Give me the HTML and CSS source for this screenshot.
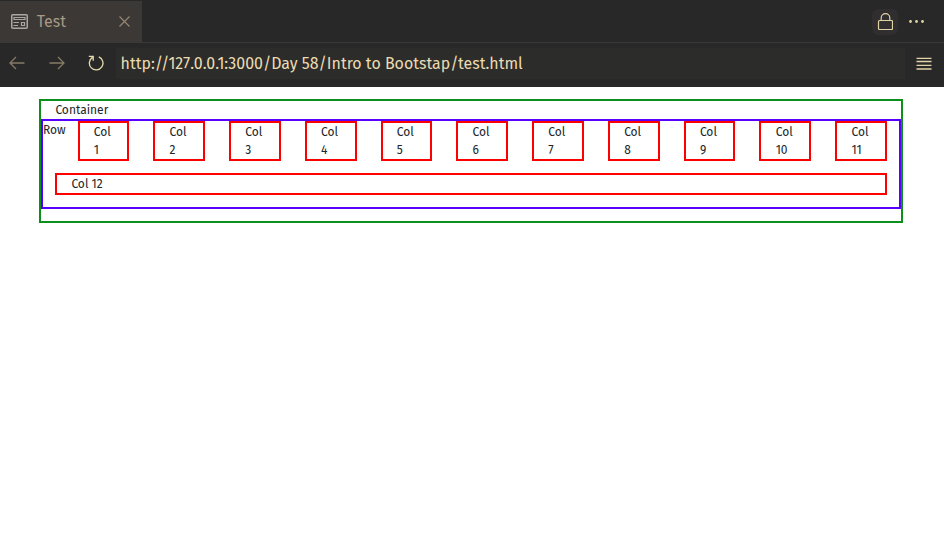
FILE: index.html
```html
<!DOCTYPE html>
<html lang="en">
<head>
<meta charset="utf-8">
<title>Test</title>
<link rel="stylesheet" href="styles.css">
</head>
<body>
<header class="tabs">
  <div class="tab">
    <svg class="page-icon" width="17" height="15" viewBox="0 0 17 15" fill="none" stroke="#a9a7a5"><rect x=".75" y=".75" width="15.5" height="13.5" rx="1" stroke-width="1.5"/><path d="M3 3.5h11v2H3zM10.5 8.5h3v3h-3zM2.5 8.5h5.5M2.5 11.5h4.5" stroke-width="1.2"/></svg>
    <span class="tab-title">Test</span>
    <svg class="close" width="11" height="11" viewBox="0 0 11 11" fill="none" stroke="#958670" stroke-width="1.2"><path d="M.5.5l10 10M10.5.5l-10 10"/></svg>
  </div>
  <div class="actions">
    <div class="lock"><svg width="16" height="18" viewBox="0 0 16 18" fill="none" stroke="#e0d3a6" stroke-width="1.2"><rect x="1.5" y="7.5" width="14" height="9" rx="1"/><path d="M4.2 7.5V4.9a4.3 4.3 0 0 1 8.6 0v2.6"/></svg></div>
    <svg class="dots" width="16" height="4" viewBox="0 0 16 4" fill="#e0d3a6"><circle cx="2.5" cy="2.5" r="1.4"/><circle cx="8.5" cy="2.5" r="1.4"/><circle cx="14.5" cy="2.5" r="1.4"/></svg>
  </div>
</header>
<nav class="toolbar">
  <svg class="arrow" width="16" height="14" viewBox="0 0 16 14" fill="none" stroke="#857b65" stroke-width="1.3"><path d="M15.5 7H1M7 1L1 7l6 6"/></svg>
  <svg class="arrow" width="16" height="14" viewBox="0 0 16 14" fill="none" stroke="#857b65" stroke-width="1.3"><path d="M.5 7H15M9 1l6 6-6 6"/></svg>
  <svg class="reload" width="16" height="16" viewBox="0 0 16 16" fill="none" stroke="#e8dcae" stroke-width="1.3"><path d="M10.8 1.8A6.8 6.8 0 1 1 4.4 2.4M.8 1.3h4.4v4.4"/></svg>
  <div class="address"><span>http://127.0.0.1:3000/Day 58/Intro to Bootstap/test.html</span></div>
  <svg class="menu" width="16" height="13" viewBox="0 0 16 13" stroke="#e0d3a6" stroke-width="1.4"><path d="M.5 1.4h15M.5 4.5h15M.5 8.4h15M.5 12h15"/></svg>
</nav>
<main class="container">
  <div class="label">Container</div>
  <div class="row">
    <div class="first-line">
      <span class="row-label">Row</span>
      <div class="cols">
        <div class="col">Col<br>1</div>
        <div class="col">Col<br>2</div>
        <div class="col">Col<br>3</div>
        <div class="col">Col<br>4</div>
        <div class="col">Col<br>5</div>
        <div class="col">Col<br>6</div>
        <div class="col">Col<br>7</div>
        <div class="col">Col<br>8</div>
        <div class="col">Col<br>9</div>
        <div class="col">Col<br>10</div>
        <div class="col">Col<br>11</div>
      </div>
    </div>
    <div class="col full">Col 12</div>
  </div>
</main>
</body>
</html>
```
FILE: styles.css
```css
* { box-sizing: border-box; }
body {
  margin: 0;
  background: #fff;
  color: #212529;
  font: 12px/18px "Fira Sans", "Noto Sans", sans-serif;
  overflow: hidden;
}
svg { display: block; flex: none; }
.tabs {
  display: flex;
  justify-content: space-between;
  height: 43px;
  background: #282828;
  border-bottom: 1px solid #3c3836;
}
.tab {
  display: flex;
  align-items: center;
  width: 142px;
  margin-top: 1px;
  padding: 0 12px 0 11px;
  background: #3c3836;
}
.tab-title {
  margin-left: 8.7px;
  color: #a89984;
  font-size: 15.95px;
  line-height: 22px;
}
.close { margin-left: auto; }
.actions {
  display: flex;
  align-items: center;
  gap: 10px;
  padding-right: 20px;
}
.lock {
  display: grid;
  place-items: center;
  width: 26px;
  height: 26px;
  margin-top: 2px;
  border-radius: 6px;
  background: #302e2e;
}
.toolbar {
  display: flex;
  align-items: center;
  height: 44px;
  padding: 0 12px 4px 9px;
  background: #282828;
}
.arrow { margin-right: 24px; }
.reload { margin-right: 12px; margin-left: -1px; }
.address {
  width: 789px;
  height: 31px;
  margin-top: 1px;
  padding-left: 4.6px;
  background: #2c2c2a;
  color: #ebdbb2;
  font-size: 15.95px;
  line-height: 32px;
  white-space: nowrap;
}
.menu { margin-left: auto; }
.container {
  width: 864px;
  height: 124px;
  margin: 12px 0 0 39px;
  border: 2px solid #0d8f1c;
}
.label { padding-left: 14.4px; }
.row {
  height: 90px;
  padding-right: 12px;
  border: 2px solid #5800ff;
}
.first-line { display: flex; }
.row-label { width: 34.6px; }
.cols {
  display: grid;
  grid-template-columns: repeat(11, minmax(0, 1fr));
  gap: 24px;
  flex: 1;
}
.col {
  padding-left: 14.2px;
  border: 2px solid #f00;
}
.full { margin: 12px 0 0 12px; padding-left: 14.4px; }
```
